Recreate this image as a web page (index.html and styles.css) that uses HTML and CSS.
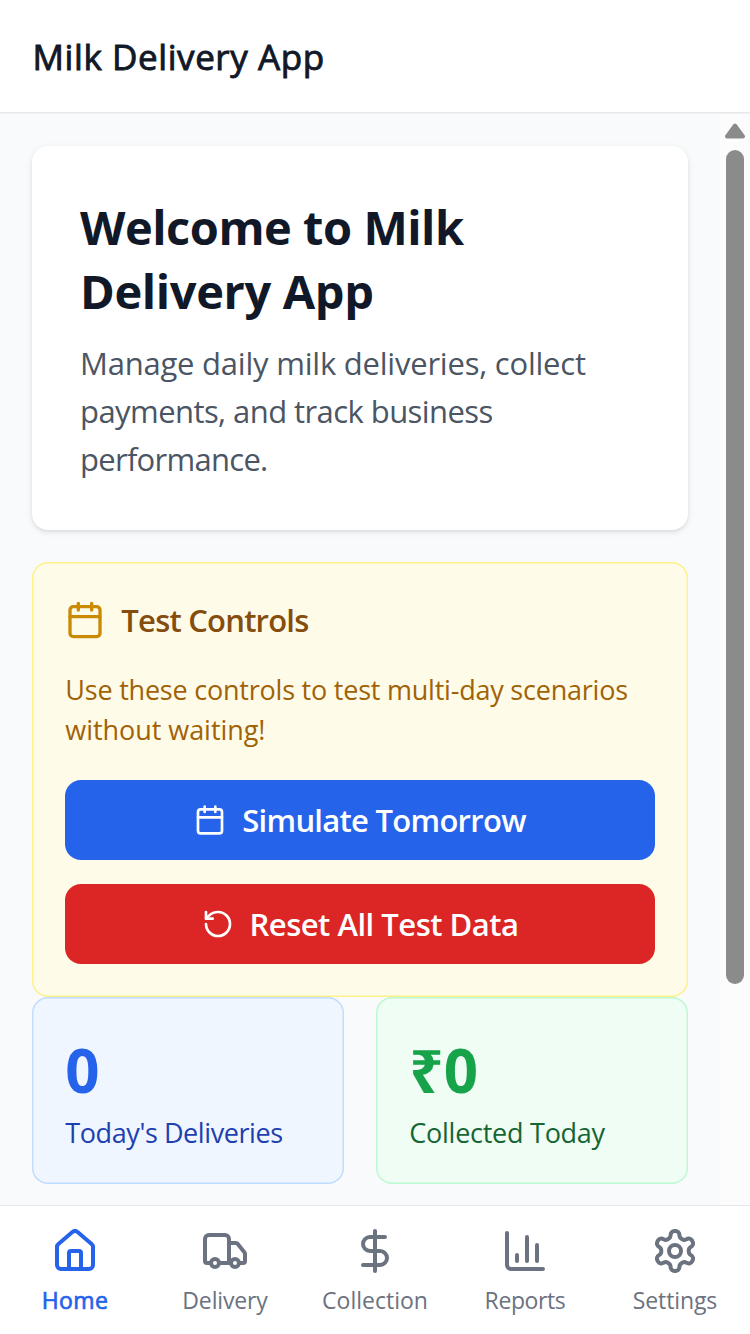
FILE: index.html
```html
<!DOCTYPE html>
<html lang="en">
<head>
<meta charset="utf-8">
<title>Milk Delivery App</title>
<link rel="stylesheet" href="styles.css">
</head>
<body>
<div class="app">
  <header class="header"><h1 class="header-title"><span class="t-header">Milk Delivery App</span></h1></header>
  <div class="viewport">
    <main class="main">
      <section class="welcome">
        <h2 class="welcome-title"><span class="t-w1">Welcome to Milk</span><br><span class="t-w2">Delivery App</span></h2>
        <p class="welcome-text"><span class="t-p1">Manage daily milk deliveries, collect</span><br><span class="t-p2">payments, and track business</span><br><span class="t-p3">performance.</span></p>
      </section>
      <section class="controls">
        <div class="controls-head">
          <svg class="icon icon-40" viewBox="0 0 24 24"><path d="M8 2v4M16 2v4M3 10h18"/><rect x="3" y="4" width="18" height="18" rx="2"/></svg>
          <h3 class="controls-title"><span class="t-test">Test Controls</span></h3>
        </div>
        <p class="controls-text"><span class="t-u1">Use these controls to test multi-day scenarios</span><br><span class="t-u2">without waiting!</span></p>
        <div class="buttons">
          <button class="button button-blue">
            <svg class="icon icon-32" viewBox="0 0 24 24"><path d="M8 2v4M16 2v4M3 10h18"/><rect x="3" y="4" width="18" height="18" rx="2"/></svg>
            <span class="t-sim">Simulate Tomorrow</span>
          </button>
          <button class="button button-red">
            <svg class="icon icon-32" viewBox="0 0 24 24"><path d="M3 12a9 9 0 1 0 9-9 9.75 9.75 0 0 0-6.74 2.74L3 8"/><path d="M3 3v5h5"/></svg>
            <span class="t-reset">Reset All Test Data</span>
          </button>
        </div>
      </section>
      <section class="stats">
        <div class="stat stat-blue"><div class="stat-value">0</div><div class="stat-label"><span class="t-today">Today's Deliveries</span></div></div>
        <div class="stat stat-green"><div class="stat-value"><span class="t-rupee">₹0</span></div><div class="stat-label"><span class="t-coll">Collected Today</span></div></div>
      </section>
    </main>
    <div class="scrollbar">
      <svg class="scroll-arrow" viewBox="0 0 22 16"><path d="M11 2.500 19 13.500H3z"/></svg>
      <div class="scroll-thumb"></div>
    </div>
  </div>
  <nav class="nav">
    <a class="nav-item active">
      <svg class="icon icon-48" viewBox="0 0 24 24"><path d="M15 21v-8a1 1 0 0 0-1-1h-4a1 1 0 0 0-1 1v8"/><path d="M3 10a2 2 0 0 1 .709-1.528l7-5.999a2 2 0 0 1 2.582 0l7 5.999A2 2 0 0 1 21 10v9a2 2 0 0 1-2 2H5a2 2 0 0 1-2-2z"/></svg>
      <span class="nav-label t-home">Home</span></a>
    <a class="nav-item">
      <svg class="icon icon-48" viewBox="0 0 24 24"><path d="M14 18V6a2 2 0 0 0-2-2H4a2 2 0 0 0-2 2v11a1 1 0 0 0 1 1h2"/><path d="M15 18H9"/><path d="M19 18h2a1 1 0 0 0 1-1v-3.650a1 1 0 0 0-.22-.624l-3.480-4.350A1 1 0 0 0 17.520 8H14"/><circle cx="17" cy="18" r="2"/><circle cx="7" cy="18" r="2"/></svg>
      <span class="nav-label t-deliv">Delivery</span></a>
    <a class="nav-item">
      <svg class="icon icon-48" viewBox="0 0 24 24"><path d="M12 2v20"/><path d="M17 5H9.500a3.500 3.500 0 0 0 0 7h5a3.500 3.500 0 0 1 0 7H6"/></svg>
      <span class="nav-label t-collection">Collection</span></a>
    <a class="nav-item">
      <svg class="icon icon-48" viewBox="0 0 24 24"><path d="M3 3v16a2 2 0 0 0 2 2h16M18 17V9M13 17V5M8 17v-3"/></svg>
      <span class="nav-label t-reports">Reports</span></a>
    <a class="nav-item">
      <svg class="icon icon-48" viewBox="0 0 24 24"><path d="M12.220 2h-.44a2 2 0 0 0-2 2v.18a2 2 0 0 1-1 1.730l-.43.25a2 2 0 0 1-2 0l-.15-.08a2 2 0 0 0-2.730.73l-.22.38a2 2 0 0 0 .73 2.730l.15.1a2 2 0 0 1 1 1.720v.51a2 2 0 0 1-1 1.740l-.15.09a2 2 0 0 0-.73 2.730l.22.38a2 2 0 0 0 2.730.73l.15-.08a2 2 0 0 1 2 0l.43.25a2 2 0 0 1 1 1.730V20a2 2 0 0 0 2 2h.44a2 2 0 0 0 2-2v-.18a2 2 0 0 1 1-1.730l.43-.25a2 2 0 0 1 2 0l.15.08a2 2 0 0 0 2.730-.73l.22-.39a2 2 0 0 0-.73-2.730l-.15-.08a2 2 0 0 1-1-1.740v-.5a2 2 0 0 1 1-1.740l.15-.09a2 2 0 0 0 .73-2.730l-.22-.38a2 2 0 0 0-2.730-.73l-.15.08a2 2 0 0 1-2 0l-.43-.25a2 2 0 0 1-1-1.730V4a2 2 0 0 0-2-2z"/><circle cx="12" cy="12" r="3"/></svg>
      <span class="nav-label t-settings">Settings</span></a>
  </nav>
</div>
</body>
</html>
```
FILE: styles.css
```css
* { box-sizing: border-box; }
body, h1, h2, h3, p { margin: 0; }
body { font-family: "Open Sans", "Noto Sans", sans-serif; background: #f9fafb; }
.app { display: flex; flex-direction: column; width: 750px; height: 1334px; overflow: hidden; white-space: nowrap; }
.header { flex: none; height: 113px; padding: 29px 32px 0 32.500px; background: #fff; border-bottom: 1px solid #e5e7eb; }
.header-title { font-size: 35px; line-height: 56px; font-weight: 400; color: #111827; -webkit-text-stroke: .9px #111827; }
.viewport { flex: none; height: 1092px; display: flex; overflow: hidden; background: #f9fafb; box-shadow: inset 0 1px #f1f3f5; }
.main { width: 720px; padding: 33px 32px 0; }
.welcome { height: 384px; padding: 49px 48px 0; border-radius: 16px; background: #fff; box-shadow: 0 2px 6px rgba(0,0,0,.1), 0 2px 4px -2px rgba(0,0,0,.1); }
.welcome-title { font-size: 47px; line-height: 64px; font-weight: 700; color: #111827; }
.welcome-text { margin-top: 16px; font-size: 31px; line-height: 48px; color: #4b5563; }
.controls { height: 435px; margin-top: 32px; padding: 33.33px; border-radius: 16px; background: #fefce8; box-shadow: inset 0 0 0 1.4px #fef08a; }
.controls-head { display: flex; align-items: center; gap: 16px; height: 50px; color: #ca8a04; }
.controls-title { font-size: 31px; line-height: 48px; font-weight: 600; color: #854d0e; }
.controls-text { margin-top: 25px; font-size: 27px; line-height: 40px; color: #a16207; }
.buttons { display: grid; gap: 24px; margin-top: 29.500px; }
.button { display: flex; align-items: center; justify-content: center; gap: 16px; height: 80px; padding: 0; border: 0; border-radius: 16px; font: 600 31px/48px "Open Sans", "Noto Sans", sans-serif; color: #fff; }
.button-blue { background: #2563eb; }
.button-red { background: #dc2626; }
.stats { display: grid; grid-template-columns: 1fr 1fr; gap: 32px; }
.stat { height: 187px; padding: 33.33px; border-radius: 16px; }
.stat-blue { background: #eff6ff; box-shadow: inset 0 0 0 1.4px #bfdbfe; color: #1e40af; }
.stat-green { background: #f0fdf4; box-shadow: inset 0 0 0 1.4px #bbf7d0; color: #166534; }
.stat-value { font-size: 60px; line-height: 80px; font-weight: 700; }
.stat-blue .stat-value { color: #2563eb; }
.stat-green .stat-value { color: #16a34a; }
.stat-label { font-size: 27px; line-height: 40px; margin-top: 2.600px; }
.scrollbar { width: 30px; background: #fcfcfc; display: flex; flex-direction: column; align-items: center; padding: 10px 0 0; box-shadow: inset 0 1px #f1f3f5; }
.scroll-arrow { width: 22px; height: 16px; fill: #8b8b8b; stroke: #8b8b8b; stroke-width: 4; stroke-linejoin: round; flex: none; }
.scroll-thumb { width: 18px; height: 834px; margin-top: 11px; border-radius: 9px; background: #8b8b8b; flex: none; }
.nav { flex: none; height: 129px; display: grid; grid-template-columns: repeat(5, 1fr); padding-top: 21px; background: #fff; border-top: 1px solid #e5e7eb; }
.nav-item { display: flex; flex-direction: column; align-items: center; gap: 9px; color: #6b7280; }
.nav-label { font-size: 23px; line-height: 32px; }
.active { color: #2563eb; }
.active .nav-label { -webkit-text-stroke: .7px #2563eb; }
.icon { flex: none; fill: none; stroke: currentColor; stroke-width: 2; stroke-linecap: round; stroke-linejoin: round; }
.icon-32 { width: 32px; height: 32px; }
.icon-40 { width: 40px; height: 40px; }
.icon-48 { width: 48px; height: 48px; }

/* Tracking per line of text */
.t-header { letter-spacing: .58px; }
.t-w1 { letter-spacing: -.48px; }
.t-w2 { letter-spacing: -.36px; }
.t-p1 { letter-spacing: -.22px; }
.t-p2 { letter-spacing: -.57px; }
.t-p3 { letter-spacing: -.72px; }
.t-test { letter-spacing: -.78px; }
.t-u1 { letter-spacing: -.22px; }
.t-u2 { letter-spacing: -.05px; }
.t-sim { letter-spacing: -.72px; }
.t-reset { letter-spacing: -.5px; }
.t-today { letter-spacing: -.42px; }
.t-coll { letter-spacing: -.26px; }
.t-home { letter-spacing: .4px; }
.t-deliv { letter-spacing: -.15px; }
.t-reports { letter-spacing: -.4px; }
.t-settings { letter-spacing: -.1px; }
```
